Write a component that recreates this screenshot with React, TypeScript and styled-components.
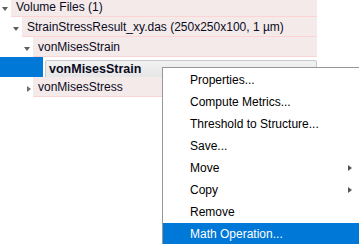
import styled, { createGlobalStyle } from "styled-components";

const GlobalStyle = createGlobalStyle`
  html, body {
    margin: 0;
    background: #ffffff;
    font-family: "Liberation Sans", Arial, sans-serif;
    font-size: 12px;
    color: #0a0a1e;
    overflow: hidden;
  }
`;

type TreeItem = {
  label: string;
  level: number;
  open?: boolean;
  editing?: boolean;
};

const treeItems: TreeItem[] = [
  { label: "Volume Files (1)", level: 0, open: true },
  { label: "StrainStressResult_xy.das (250x250x100, 1 µm)", level: 1, open: true },
  { label: "vonMisesStrain", level: 2, open: true },
  { label: "vonMisesStrain", level: 3, editing: true },
  { label: "vonMisesStress", level: 2, open: false },
];

type MenuItem = { label: string; sub?: boolean; active?: boolean };

const menuItems: MenuItem[] = [
  { label: "Properties..." },
  { label: "Compute Metrics..." },
  { label: "Threshold to Structure..." },
  { label: "Save..." },
  { label: "Move", sub: true },
  { label: "Copy", sub: true },
  { label: "Remove" },
  { label: "Math Operation...", active: true },
];

export default function App() {
  return (
    <>
      <GlobalStyle />
      <Page>
        <Tree>
          {treeItems.map((item, i) =>
            item.editing ? (
              <Row key={i}>
                <SelectedGutter $width={item.level * 11 + 10} />
                <EditorCell>
                  <Editor>{item.label}</Editor>
                </EditorCell>
              </Row>
            ) : (
              <Row key={i}>
                <Toggle $level={item.level}>
                  {item.open ? <DownArrow /> : <RightArrow />}
                </Toggle>
                <Label>{item.label}</Label>
              </Row>
            )
          )}
        </Tree>
        <Menu>
          {menuItems.map((m) => (
            <MenuRow key={m.label} $active={m.active}>
              <span>{m.label}</span>
              {m.sub && <SubArrow />}
            </MenuRow>
          ))}
        </Menu>
      </Page>
    </>
  );
}

const Page = styled.div`
  position: relative;
  width: 359px;
  height: 244px;
  overflow: hidden;
`;

const Tree = styled.div`
  display: flex;
  flex-direction: column;
  width: 317px;
  margin-top: -3px;
`;

const Row = styled.div`
  display: flex;
  height: 20px;
`;

const Toggle = styled.div<{ $level: number }>`
  flex: none;
  width: 11px;
  margin-left: ${(p) => p.$level * 11}px;
  display: flex;
  align-items: center;
  justify-content: center;
`;

const DownArrow = styled.span`
  width: 0;
  height: 0;
  margin-left: -2px;
  margin-top: 3px;
  border-left: 3.5px solid transparent;
  border-right: 3.5px solid transparent;
  border-top: 4px solid #5e5e5e;
`;

const RightArrow = styled.span`
  width: 0;
  height: 0;
  margin-left: 2px;
  margin-top: 3px;
  border-top: 3.5px solid transparent;
  border-bottom: 3.5px solid transparent;
  border-left: 4px solid #6e6e6e;
`;

const Label = styled.div`
  flex: 1;
  box-sizing: border-box;
  height: 20px;
  padding: 2px 0 0 5px;
  line-height: 17px;
  background: #f4eaea;
  border-bottom: 1px solid #fdd3d3;
  white-space: nowrap;
  overflow: hidden;
`;

const SelectedGutter = styled.div<{ $width: number }>`
  flex: none;
  width: ${(p) => p.$width}px;
  background: #0078d7;
`;

const EditorCell = styled.div`
  flex: 1;
  display: flex;
  padding: 3px 0 0 2px;
  background: #ffffff;
`;

const Editor = styled.div`
  flex: 1;
  box-sizing: border-box;
  padding-left: 3px;
  line-height: 16px;
  font-weight: bold;
  font-size: 12.5px;
  background: linear-gradient(#f2f2f2, #e6e6e6);
  border: 1px solid #c9c9c9;
  border-bottom: none;
  border-radius: 2px 2px 0 0;
  white-space: nowrap;
`;

const Menu = styled.div`
  position: absolute;
  left: 162px;
  top: 67px;
  width: 197px;
  box-sizing: border-box;
  background: #ffffff;
  border: 1px solid #979797;
  border-right: none;
  padding-top: 1px;
  display: flex;
  flex-direction: column;
  color: #000000;
`;

const MenuRow = styled.div<{ $active?: boolean }>`
  position: relative;
  display: flex;
  align-items: center;
  height: 22px;
  padding-left: 27px;
  background: ${(p) => (p.$active ? "#0078d7" : "transparent")};
  color: ${(p) => (p.$active ? "#ffffff" : "#000000")};
`;

const SubArrow = styled.span`
  position: absolute;
  right: 7px;
  top: 8px;
  width: 0;
  height: 0;
  border-top: 3.5px solid transparent;
  border-bottom: 3.5px solid transparent;
  border-left: 4px solid #555555;
`;
